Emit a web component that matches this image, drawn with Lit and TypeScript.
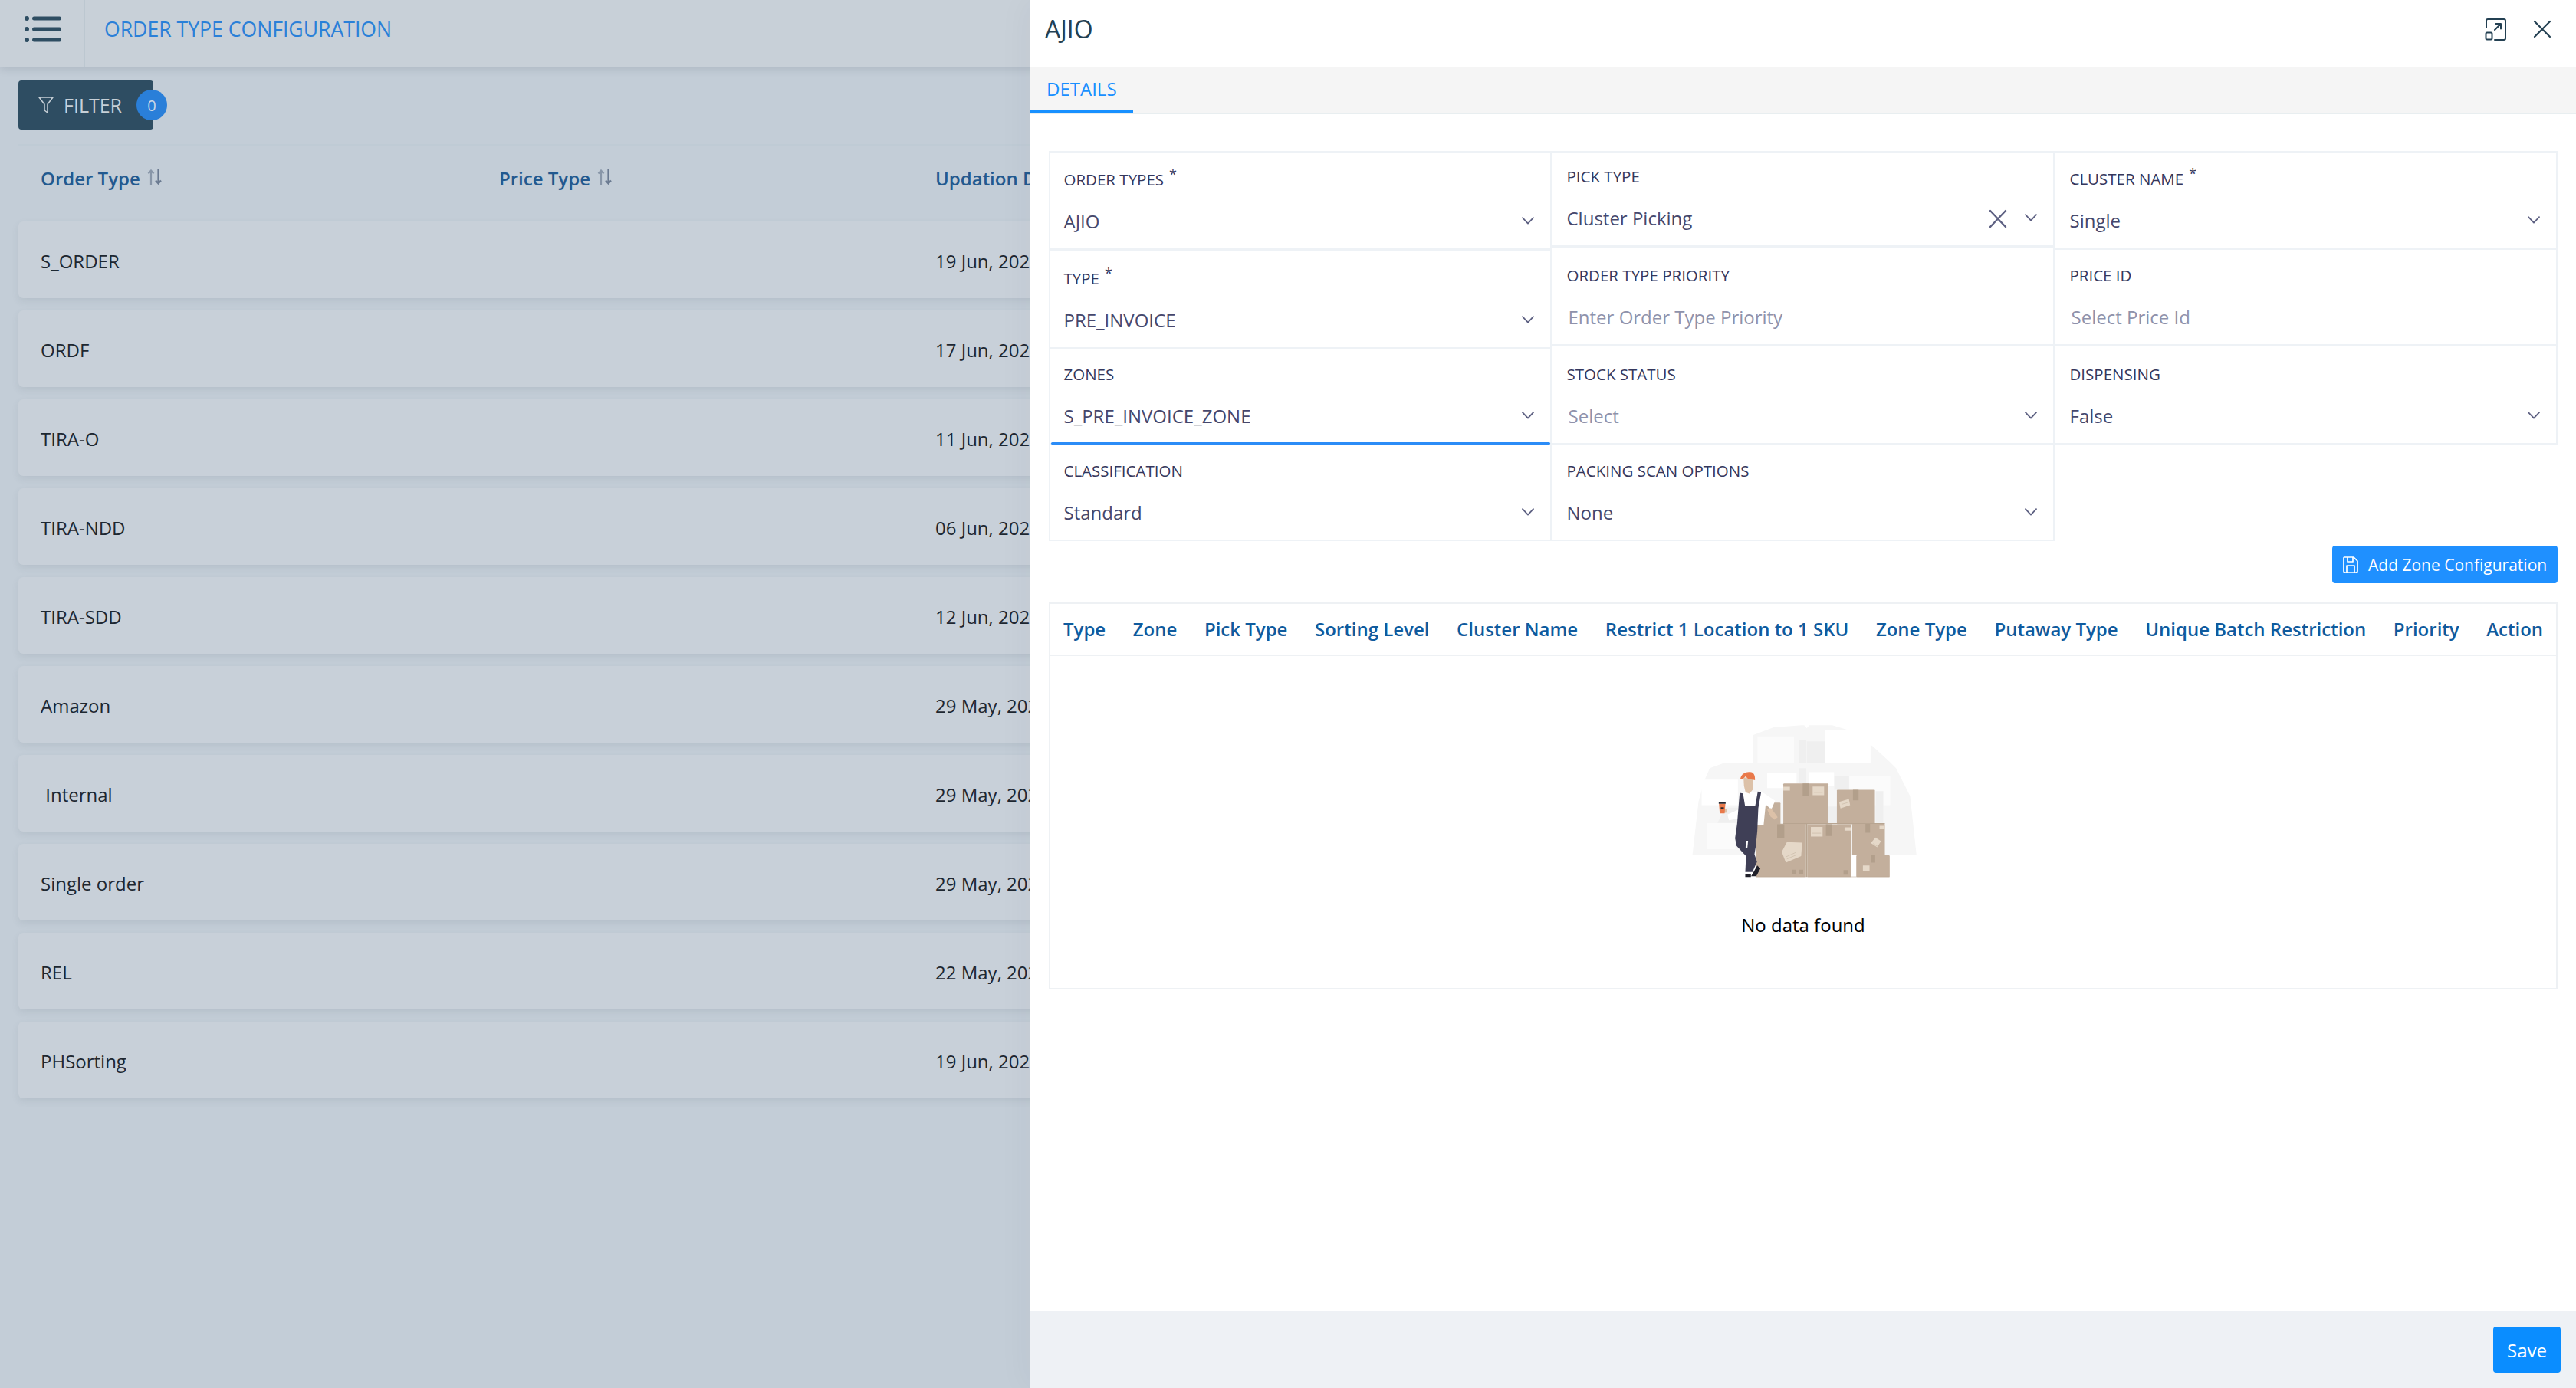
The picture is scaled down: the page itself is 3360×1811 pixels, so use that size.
import { LitElement, html, css, svg } from "lit";
import { customElement } from "lit/decorators.js";

const ROWS: [string, string][] = [
  ["S_ORDER", "19 Jun, 2024"],
  ["ORDF", "17 Jun, 2024"],
  ["TIRA-O", "11 Jun, 2024"],
  ["TIRA-NDD", "06 Jun, 2024"],
  ["TIRA-SDD", "12 Jun, 2024"],
  ["Amazon", "29 May, 2024"],
  ["\u00a0Internal", "29 May, 2024"],
  ["Single order", "29 May, 2024"],
  ["REL", "22 May, 2024"],
  ["PHSorting", "19 Jun, 2024"],
];

interface Cell {
  label: string;
  value: string;
  star?: boolean;
  placeholder?: boolean;
  clear?: boolean;
  noChevron?: boolean;
  focus?: boolean;
}

const COL1: Cell[] = [
  { label: "ORDER TYPES", value: "AJIO", star: true },
  { label: "TYPE", value: "PRE_INVOICE", star: true },
  { label: "ZONES", value: "S_PRE_INVOICE_ZONE", focus: true },
  { label: "CLASSIFICATION", value: "Standard" },
];
const COL2: Cell[] = [
  { label: "PICK TYPE", value: "Cluster Picking", clear: true },
  { label: "ORDER TYPE PRIORITY", value: "Enter Order Type Priority", placeholder: true, noChevron: true },
  { label: "STOCK STATUS", value: "Select", placeholder: true },
  { label: "PACKING SCAN OPTIONS", value: "None" },
];
const COL3: Cell[] = [
  { label: "CLUSTER NAME", value: "Single", star: true },
  { label: "PRICE ID", value: "Select Price Id", placeholder: true, noChevron: true },
  { label: "DISPENSING", value: "False" },
];

const HEADS = [
  "Type", "Zone", "Pick Type", "Sorting Level", "Cluster Name", "Restrict 1 Location to 1 SKU",
  "Zone Type", "Putaway Type", "Unique Batch Restriction", "Priority", "Action",
];

const chevron = html`<svg class="chev" viewBox="0 0 16 10" fill="none" stroke="#5d6082" stroke-width="1.8" stroke-linecap="round" stroke-linejoin="round"><path d="M1 1.2 8 8.6l7-7.4"/></svg>`;
const sortIcon = html`<svg class="sort" viewBox="0 0 20 20" fill="none" stroke-width="2.2"><path d="M5 20V2M1.5 5.5 5 1.5l3.5 4" stroke="#8896a8"/><path d="M14.5 0v18M11 14.5l3.5 4 3.5-4" stroke="#6a7a91"/></svg>`;

const illustration = svg`
  <path fill="#f6f6f6" d="M82 590 100 430l6-50 24-85 20-45 55-20 115-2V120l80-30 110-8h10l10 12 10-12h90l60 18 100 65 65 60 25 25 55 110 25 230Z"/>
  <path fill="#fff" d="M602 100h178v128H602ZM118 295h142v100H118Z"/>
  <path fill="#fbfbfb" d="M337 125h143v103H337ZM138 466h112v102H138ZM697 280h160v115H697Z"/>
  <path fill="#fff" d="M375 268h115v60H375ZM540 266h97v55h-97Z"/>
  <path fill="#efefef" d="M500 140h28v88h-28ZM530 145h72v83h-72ZM500 250h28v60h-28ZM638 280h58v55h-58ZM615 400h33v68h-33ZM800 340h30v125h-30ZM180 465l30-60h55v60Z"/>
  <g fill="#c3af9c">
    <rect x="438" y="310" width="177" height="160" rx="3"/>
    <rect x="648" y="335" width="149" height="135" rx="3"/>
    <rect x="345" y="385" width="82" height="90" rx="3"/>
    <rect x="330" y="468" width="197" height="209" rx="3"/>
    <rect x="532" y="470" width="173" height="207" rx="3"/>
    <rect x="708" y="468" width="128" height="124" rx="3"/>
    <rect x="724" y="592" width="131" height="85" rx="3"/>
  </g>
  <path fill="#b29f8b" d="M514 310h26v48h-26ZM711 335h22v41h-22ZM414 470h28v54h-28ZM605 470h25v46h-25ZM760 468h18v35h-18ZM782 592h16v28h-16ZM471 648h18v18h-18ZM498 648h18v18h-18ZM674 650h18v18h-18Z"/>
  <path fill="#b7a490" d="M527 468h5v209h-5ZM438 466h398v3H438ZM330 675h525v2H330Z"/>
  <path fill="#e5d8c8" d="M553 322h45v34h-45ZM546 481h46v37h-46ZM432 578l20-38 60 2-4 53-60 25ZM657 382l38-11 5 24-38 13ZM781 544l18-22 22 14-15 24ZM750 632h26v20h-26ZM438 323h26v15h-26ZM678 482h27v13h-27ZM815 476h21v12h-21Z"/>
  <path fill="none" stroke="#c9b9a6" stroke-width="2" d="M558 345h34M552 505h34M448 598l40-18M452 606l38-16M666 392l24-7M790 546l18 11"/>
  <path fill="#fff" d="M268 345 352 342l54 36-15 34-22-20-8 80-70 0-6-30-60 12-6-22 55-25Z"/>
  <path fill="#dcc1a8" d="M282 285 321 295 318 335 305 350 290 345 284 320ZM375 412 390 406 416 442 404 452 388 440ZM206 408l10 2 0 14-10 2Z"/>
  <path fill="#e9794a" d="M270 290c4-18 20-27 38-25 12 1 20 8 19 32l-27-5-10-10-8 8c-6 3-13 3-12 0ZM186 390h25l-3 37h-19Z"/>
  <path fill="#27272f" d="M185 384h27v6h-27ZM193 403h12v6h-12Z"/>
  <path fill="#3f3f56" d="M267 347l13 2 8 48h40l10-55 13 3-11 62-4 90-6 60-5 30 10 30-18 40-28 0 3-62-37-40-6-30 8-56Z"/>
  <path fill="#fff" d="M293 535l7 0-3 30-7-5Z"/>
  <path fill="#1f1f29" d="M336 632l12 12-16 30h-20ZM289 667h22v10h-22Z"/>
`;

@customElement("app-root")
export class AppRoot extends LitElement {
  static styles = css`
    :host {
      display: block;
      position: relative;
      width: 100%;
      height: 100vh;
      overflow: hidden;
      font-family: "Open Sans", "Liberation Sans", sans-serif;
      background: #c3cdd7;
    }
    .page { display: flex; flex-direction: column; height: 100%; }
    .topbar {
      display: flex;
      align-items: center;
      height: 87px;
      flex: none;
      background: #c8d0d8;
      box-shadow: 0 3px 10px rgba(60, 75, 90, 0.16);
    }
    .menu {
      width: 111px;
      height: 100%;
      flex: none;
      display: flex;
      align-items: center;
      justify-content: center;
      box-sizing: border-box;
      border-right: 1px solid #bcc7d0;
      padding-bottom: 12px;
    }
    .menu svg { width: 48px; height: 34px; margin-left: 1px; }
    .title { margin-left: 25px; font-size: 26.6px; font-weight: 500; line-height: 36px; color: #2a80d8; padding-bottom: 12px; }
    .content { padding: 18px 0 0 24px; flex: 1; min-height: 0; }
    .filter-wrap { display: flex; }
    .filter {
      position: relative;
      width: 176px;
      height: 64px;
      box-sizing: border-box;
      display: flex;
      align-items: center;
      gap: 13px;
      padding-left: 26px;
      background: #2e4d62;
      border-radius: 4px;
      color: #c7d0d7;
      font-size: 25px;
    }
    .filter svg { width: 20px; height: 22px; flex: none; }
    .badge {
      position: absolute;
      left: 154px;
      top: 12px;
      width: 40px;
      height: 40px;
      border-radius: 50%;
      background: #2a7fd9;
      color: #c9d7e6;
      font-size: 20px;
      display: flex;
      align-items: center;
      justify-content: center;
    }
    .thead {
      margin-top: 19px;
      height: 101px;
      box-sizing: border-box;
      border-top: 2px solid #bfcbd5;
      display: grid;
      grid-template-columns: 598px 569px 1fr;
      padding-left: 29px;
      padding-top: 25px;
      align-items: start;
      font-size: 24px;
      font-weight: 600;
      color: #22598f;
      line-height: 36px;
      white-space: nowrap;
    }
    .th { display: flex; align-items: center; gap: 9px; }
    .sort { width: 20px; height: 20px; flex: none; margin-top: -4px; }
    .rows { display: flex; flex-direction: column; gap: 16px; }
    .row {
      height: 100px;
      display: grid;
      grid-template-columns: 1167px 1fr;
      align-items: center;
      padding-left: 29px;
      padding-top: 2px;
      box-sizing: border-box;
      background: #c8d0d9;
      border-radius: 6px 0 0 6px;
      box-shadow: 0 4px 10px rgba(70, 85, 100, 0.1);
      font-size: 24px;
      color: #1d2731;
      white-space: nowrap;
    }
    .drawer {
      position: absolute;
      top: 0;
      bottom: 0;
      right: 0;
      width: 2016px;
      background: #fff;
      display: flex;
      flex-direction: column;
      box-shadow: -6px 0 40px rgba(50, 60, 70, 0.04);
    }
    .d-head {
      height: 87px;
      flex: none;
      display: flex;
      align-items: center;
      padding: 0 32px 12px 19px;
      box-sizing: border-box;
    }
    .d-title { flex: 1; font-size: 32px; color: #234052; line-height: 40px; }
    .d-head svg { flex: none; }
    .expand { width: 30px; height: 30px; margin-right: 34px; }
    .close { width: 24px; height: 24px; }
    .tabs {
      height: 62px;
      flex: none;
      box-sizing: border-box;
      background: #f5f5f5;
      border-bottom: 2px solid #e8eef0;
      display: flex;
    }
    .tab {
      width: 134px;
      height: 60px;
      box-sizing: border-box;
      border-bottom: 3px solid #1890ff;
      color: #1890ff;
      font-size: 24px;
      font-weight: 500;
      padding: 11px 0 0 21px;
      line-height: 36px;
    }
    .body { flex: 1; min-height: 0; padding: 48px 24px 0; }
    .form { display: grid; grid-template-columns: repeat(3, 656px); height: 509px; align-items: start; }
    .col { display: grid; }
    .c1 { grid-template-rows: 129px 129px 125px 126px; }
    .c2 { grid-template-rows: 125px 129px 129px 126px; }
    .c3 { grid-template-rows: 128px 126px 129px; }
    .cell {
      box-sizing: border-box;
      border: 2px solid #eef2f6;
      border-top-width: 1px;
      border-left-width: 1px;
      display: flex;
      flex-direction: column;
      justify-content: flex-end;
      padding: 0 18px 19px 18.5px;
      position: relative;
    }
    .col > .cell:first-child { border-top-width: 2px; }
    .focus::after {
      content: "";
      position: absolute;
      left: 2px;
      right: 0;
      bottom: -2px;
      height: 3px;
      background: #2b8cf7;
      border-radius: 2px;
    }
    .label {
      font-size: 20.5px;
      font-weight: 500;
      line-height: 28px;
      color: #35375c;
      margin-bottom: 25.5px;
      white-space: nowrap;
    }
    .star { font-size: 18px; font-weight: 400; line-height: 0; vertical-align: 8px; margin-left: 7px; }
    .control { display: flex; align-items: center; height: 32px; gap: 20px; }
    .value { flex: 1; font-size: 24px; line-height: 32px; color: #45476c; white-space: nowrap; }
    .ph { color: #8f92ab; padding-left: 2px; }
    .chev { width: 16px; height: 10px; flex: none; margin-right: 3px; margin-top: -2px; }
    .clear { width: 24px; height: 24px; flex: none; margin-right: 3px; }
    .actions { display: flex; justify-content: flex-end; margin-top: 6px; }
    .btn-add {
      width: 294px;
      height: 49px;
      box-sizing: border-box;
      display: flex;
      align-items: center;
      gap: 13px;
      padding-left: 14px;
      background: #1f90ff;
      border: 0;
      border-radius: 4px;
      color: #fff;
      font: 400 21px "Open Sans", sans-serif;
      white-space: nowrap;
    }
    .btn-add svg { width: 20px; height: 22px; flex: none; }
    .table {
      margin-top: 25px;
      height: 505px;
      box-sizing: border-box;
      border: 2px solid #eef1f4;
      display: flex;
      flex-direction: column;
    }
    .t-head {
      height: 68px;
      flex: none;
      box-sizing: border-box;
      border-bottom: 2px solid #eef1f4;
      display: flex;
      align-items: center;
      gap: 35.6px;
      padding-left: 17px;
      padding-bottom: 1px;
      font-size: 24px;
      font-weight: 600;
      color: #0f5b9e;
      white-space: nowrap;
    }
    .empty {
      flex: 1;
      display: flex;
      flex-direction: column;
      align-items: center;
      padding-top: 83px;
    }
    .empty svg { width: 360px; height: 213px; flex: none; margin-left: 15px; }
    .empty div { margin-top: 39px; font-size: 24px; font-weight: 500; line-height: 32px; color: #000; }
    .foot {
      height: 100px;
      flex: none;
      background: #eef1f5;
      display: flex;
      justify-content: flex-end;
      align-items: flex-start;
      padding: 20px 20px 0 0;
      box-sizing: border-box;
    }
    .save {
      width: 88px;
      height: 60px;
      border: 0;
      border-radius: 4px;
      background: #0a8dff;
      color: #fff;
      font: 400 24px "Open Sans", sans-serif;
      padding: 0;
    }
  `;

  private cell(c: Cell) {
    return html`<div class="cell ${c.focus ? "focus" : ""}">
      <div class="label">${c.label}${c.star ? html`<span class="star">*</span>` : ""}</div>
      <div class="control">
        <div class="value ${c.placeholder ? "ph" : ""}">${c.value}</div>
        ${c.clear
          ? html`<svg class="clear" viewBox="0 0 24 24" fill="none" stroke="#5d6082" stroke-width="2.4" stroke-linecap="round"><path d="M2 2l20 21M22 2 2 23"/></svg>`
          : ""}
        ${c.noChevron ? "" : chevron}
      </div>
    </div>`;
  }

  render() {
    return html`
      <div class="page">
        <div class="topbar">
          <div class="menu">
            <svg viewBox="0 0 48 34" fill="#2e4d62">
              <circle cx="3" cy="3" r="3"/><circle cx="3" cy="17" r="3"/><circle cx="3" cy="31" r="3"/>
              <rect x="10" y=".5" width="38" height="5" rx="2.5"/><rect x="10" y="14.5" width="38" height="5" rx="2.5"/><rect x="10" y="28.5" width="38" height="5" rx="2.5"/>
            </svg>
          </div>
          <div class="title">ORDER TYPE CONFIGURATION</div>
        </div>
        <div class="content">
          <div class="filter-wrap">
            <div class="filter">
              <svg viewBox="0 0 20 22" fill="none" stroke="#c7d0d7" stroke-width="1.5" stroke-linejoin="round"><path d="M1 1h18l-7 9v11l-4-3v-8Z"/></svg>
              <span>FILTER</span>
              <div class="badge">0</div>
            </div>
          </div>
          <div class="thead">
            <div class="th">Order Type ${sortIcon}</div>
            <div class="th">Price Type ${sortIcon}</div>
            <div class="th">Updation Date</div>
          </div>
          <div class="rows">
            ${ROWS.map((r) => html`<div class="row"><div>${r[0]}</div><div>${r[1]}</div></div>`)}
          </div>
        </div>
      </div>
      <aside class="drawer">
        <div class="d-head">
          <div class="d-title">AJIO</div>
          <svg class="expand" viewBox="0 0 30 30" fill="none" stroke="#234052" stroke-width="2" stroke-linecap="round" stroke-linejoin="round">
            <path d="M3 13V4a2 2 0 0 1 2-2h21a2 2 0 0 1 2 2v23a2 2 0 0 1-2 2H14"/>
            <rect x="2.5" y="19.5" width="8" height="9" rx="1.5"/>
            <path d="M14 16 22 8M15.5 8H22v6.5"/>
          </svg>
          <svg class="close" viewBox="0 0 24 24" fill="none" stroke="#234052" stroke-width="2.2" stroke-linecap="round"><path d="M2 2l20 20M22 2 2 22"/></svg>
        </div>
        <div class="tabs"><div class="tab">DETAILS</div></div>
        <div class="body">
          <div class="form">
            <div class="col c1">${COL1.map((c) => this.cell(c))}</div>
            <div class="col c2">${COL2.map((c) => this.cell(c))}</div>
            <div class="col c3">${COL3.map((c) => this.cell(c))}</div>
          </div>
          <div class="actions">
            <button class="btn-add">
              <svg viewBox="0 0 20 22" fill="none" stroke="#fff" stroke-width="1.7" stroke-linejoin="round"><path d="M2 1h12l5 5v13a2 2 0 0 1-2 2H3a2 2 0 0 1-2-2V2a1 1 0 0 1 1-1Z"/><path d="M6 1v6h7V1M5 21v-9h10v9"/></svg>
              <span>Add Zone Configuration</span>
            </button>
          </div>
          <div class="table">
            <div class="t-head">${HEADS.map((h) => html`<span>${h}</span>`)}</div>
            <div class="empty">
              <svg viewBox="0 60 1080 640">${illustration}</svg>
              <div>No data found</div>
            </div>
          </div>
        </div>
        <div class="foot"><button class="save">Save</button></div>
      </aside>
    `;
  }
}
